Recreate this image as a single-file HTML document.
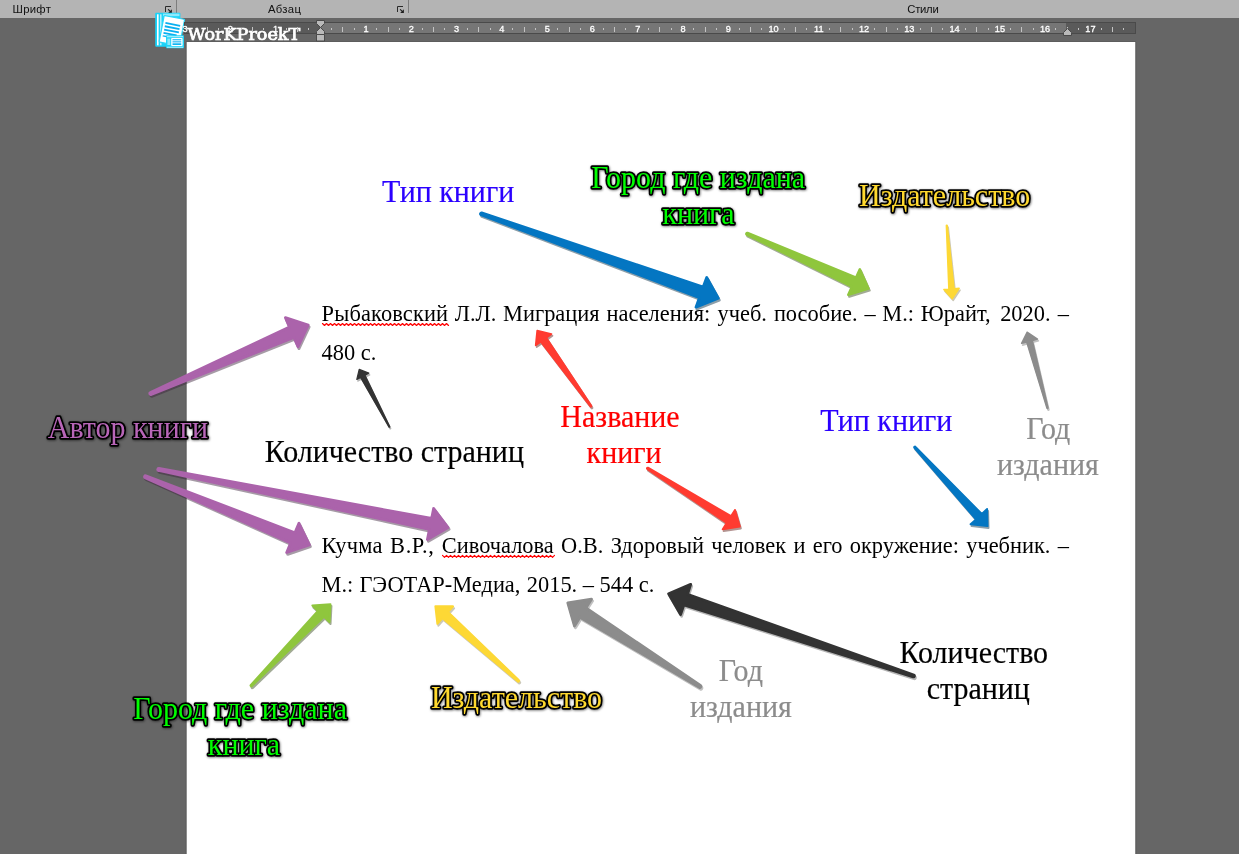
<!DOCTYPE html>
<html lang="ru">
<head>
<meta charset="utf-8">
<title>WorKProekT</title>
<style>
html,body{margin:0;padding:0;}
body{width:1239px;height:854px;overflow:hidden;background:#666666;position:relative;font-family:"Liberation Sans",sans-serif;}
#ribbon{position:absolute;left:0;top:0;width:1239px;height:18px;background:#b4b4b4;}
#ribbon span.t{position:absolute;top:2px;font-size:11.3px;line-height:14px;color:#111;white-space:nowrap;letter-spacing:0.3px;}
#ribbon i.sep{position:absolute;top:0;width:1px;height:13px;background:#7d7d7d;}
#ribbon svg.dl{position:absolute;top:6px;width:8px;height:8px;}
#root{position:absolute;left:0;top:0;width:1239px;height:854px;overflow:hidden;will-change:transform;}
#page{position:absolute;left:187px;top:42px;width:948px;height:812px;background:#ffffff;}
.p{position:absolute;left:321.6px;width:747.4px;font-family:"Liberation Serif",serif;font-size:22.4px;line-height:39px;color:#000;text-align:justify;margin:0;}
.w{position:relative;}
#ov,#rl{position:absolute;left:0;top:0;width:1239px;height:854px;}
#ov text{font-family:"Liberation Serif",serif;font-size:30px;text-anchor:middle;}
#ov text.ol{stroke:#000;stroke-width:3.4px;stroke-linejoin:round;paint-order:stroke fill;}
#rl text.rn{font-family:"Liberation Sans",sans-serif;font-size:9.2px;fill:#ffffff;stroke:#ffffff;stroke-width:0.3px;text-anchor:middle;}
#wm{font-family:"DejaVu Serif","Liberation Serif",serif;font-size:16px;fill:#fff;stroke:#fff;stroke-width:0.75px;}
#logo{position:absolute;left:153px;top:11px;width:34px;height:40px;}
</style>
</head>
<body>
<div id="root">
<div id="ribbon">
  <span class="t" style="left:12.5px">Шрифт</span>
  <span class="t" style="left:268px">Абзац</span>
  <span class="t" style="left:907.3px;letter-spacing:-0.28px">Стили</span>
  <i class="sep" style="left:176px"></i>
  <i class="sep" style="left:408px"></i>
  <svg class="dl" style="left:165px" viewBox="0 0 8 8"><path d="M0.5 6V0.5H6" fill="none" stroke="#2a2a2a" stroke-width="1"/><path d="M3.4 3.6L5.5 5.7" fill="none" stroke="#1e1e1e" stroke-width="1.1" stroke-linecap="round"/><path d="M6.9 3.2V6.9H3.2Z" fill="#1e1e1e"/></svg>
  <svg class="dl" style="left:397px" viewBox="0 0 8 8"><path d="M0.5 6V0.5H6" fill="none" stroke="#2a2a2a" stroke-width="1"/><path d="M3.4 3.6L5.5 5.7" fill="none" stroke="#1e1e1e" stroke-width="1.1" stroke-linecap="round"/><path d="M6.9 3.2V6.9H3.2Z" fill="#1e1e1e"/></svg>
</div>
<div id="page"></div>
<svg id="logo" viewBox="153 11 34 40">
  <rect x="155.2" y="12.7" width="25.2" height="34" rx="1" fill="#1bd3f8"/>
  <rect x="157" y="14.3" width="1.6" height="31" fill="#ffffff"/>
  <rect x="160.3" y="14.3" width="1.1" height="31" fill="#f2fdff"/>
  <rect x="163" y="13.6" width="16.5" height="2.6" fill="#8deafc"/>
  <g transform="rotate(11 164 15.6)">
    <rect x="164.2" y="15.4" width="20.8" height="27" rx="0.8" fill="#ffffff" stroke="#2bd7f9" stroke-width="1.2"/>
    <rect x="166.8" y="21.6" width="15" height="1.8" fill="#08b0f0"/>
    <rect x="166.8" y="25.0" width="15" height="1.8" fill="#08b0f0"/>
    <rect x="166.8" y="28.4" width="15" height="1.8" fill="#08b0f0"/>
    <rect x="166.8" y="31.8" width="13.4" height="1.8" fill="#08b0f0"/>
    <rect x="166.6" y="35" width="5" height="1.4" fill="#0fb6f2"/>
  </g>
  <rect x="166" y="35.2" width="18" height="13" rx="0.8" fill="#22d4f8"/>
  <rect x="167" y="36.3" width="16" height="0.9" fill="#d5f8fe"/>
  <rect x="171.2" y="38" width="11.4" height="8" rx="0.8" fill="#ffffff"/>
  <rect x="172.5" y="39.2" width="8.8" height="1.1" fill="#0fb6f2"/>
  <rect x="172.5" y="41.3" width="8.8" height="1.1" fill="#0fb6f2"/>
  <rect x="172.5" y="43.3" width="8.8" height="1.7" fill="#0fb6f2"/>
  <rect x="167.4" y="38.6" width="2.8" height="6.4" fill="#8be9fc"/>
  <rect x="167" y="46.8" width="16" height="0.8" fill="#d5f8fe"/>
</svg>
<svg id="rl" viewBox="0 0 1239 854">
  <rect x="186" y="41" width="950" height="1" fill="#5d5d5d"/>
  <rect x="185" y="42" width="1" height="812" fill="#616161"/>
  <rect x="186" y="42" width="1" height="812" fill="#8e8e8e"/>
  <rect x="1135" y="42" width="1" height="812" fill="#838383"/>
  <rect x="1136" y="42" width="1" height="812" fill="#616161"/>
  <rect x="184" y="22" width="952" height="12" fill="#4a4a4a"/>
  <rect x="185" y="23" width="950" height="10" fill="#5a5a5a"/>
  <rect x="321" y="23" width="745" height="10" fill="#767676"/>
  <text id="wm" transform="translate(187.6 40.4) scale(1.1 1)">WorKProekT</text>
  <text class="rn" x="185.0" y="32">3</text>
<rect x="195" y="28" width="1" height="2" fill="#c4c4c4"/>
<rect x="207" y="27" width="1" height="5" fill="#c4c4c4"/>
<rect x="218" y="28" width="1" height="2" fill="#c4c4c4"/>
<text class="rn" x="230.3" y="32">2</text>
<rect x="241" y="28" width="1" height="2" fill="#c4c4c4"/>
<rect x="252" y="27" width="1" height="5" fill="#c4c4c4"/>
<rect x="263" y="28" width="1" height="2" fill="#c4c4c4"/>
<text class="rn" x="275.5" y="32">1</text>
<rect x="286" y="28" width="1" height="2" fill="#c4c4c4"/>
<rect x="297" y="27" width="1" height="5" fill="#c4c4c4"/>
<rect x="308" y="28" width="1" height="2" fill="#c4c4c4"/>
<rect x="331" y="28" width="1" height="2" fill="#c4c4c4"/>
<rect x="342" y="27" width="1" height="5" fill="#c4c4c4"/>
<rect x="354" y="28" width="1" height="2" fill="#c4c4c4"/>
<text class="rn" x="366.1" y="32">1</text>
<rect x="376" y="28" width="1" height="2" fill="#c4c4c4"/>
<rect x="388" y="27" width="1" height="5" fill="#c4c4c4"/>
<rect x="399" y="28" width="1" height="2" fill="#c4c4c4"/>
<text class="rn" x="411.3" y="32">2</text>
<rect x="422" y="28" width="1" height="2" fill="#c4c4c4"/>
<rect x="433" y="27" width="1" height="5" fill="#c4c4c4"/>
<rect x="444" y="28" width="1" height="2" fill="#c4c4c4"/>
<text class="rn" x="456.6" y="32">3</text>
<rect x="467" y="28" width="1" height="2" fill="#c4c4c4"/>
<rect x="478" y="27" width="1" height="5" fill="#c4c4c4"/>
<rect x="490" y="28" width="1" height="2" fill="#c4c4c4"/>
<text class="rn" x="501.9" y="32">4</text>
<rect x="512" y="28" width="1" height="2" fill="#c4c4c4"/>
<rect x="524" y="27" width="1" height="5" fill="#c4c4c4"/>
<rect x="535" y="28" width="1" height="2" fill="#c4c4c4"/>
<text class="rn" x="547.2" y="32">5</text>
<rect x="557" y="28" width="1" height="2" fill="#c4c4c4"/>
<rect x="569" y="27" width="1" height="5" fill="#c4c4c4"/>
<rect x="580" y="28" width="1" height="2" fill="#c4c4c4"/>
<text class="rn" x="592.4" y="32">6</text>
<rect x="603" y="28" width="1" height="2" fill="#c4c4c4"/>
<rect x="614" y="27" width="1" height="5" fill="#c4c4c4"/>
<rect x="625" y="28" width="1" height="2" fill="#c4c4c4"/>
<text class="rn" x="637.7" y="32">7</text>
<rect x="648" y="28" width="1" height="2" fill="#c4c4c4"/>
<rect x="659" y="27" width="1" height="5" fill="#c4c4c4"/>
<rect x="671" y="28" width="1" height="2" fill="#c4c4c4"/>
<text class="rn" x="683.0" y="32">8</text>
<rect x="693" y="28" width="1" height="2" fill="#c4c4c4"/>
<rect x="705" y="27" width="1" height="5" fill="#c4c4c4"/>
<rect x="716" y="28" width="1" height="2" fill="#c4c4c4"/>
<text class="rn" x="728.2" y="32">9</text>
<rect x="739" y="28" width="1" height="2" fill="#c4c4c4"/>
<rect x="750" y="27" width="1" height="5" fill="#c4c4c4"/>
<rect x="761" y="28" width="1" height="2" fill="#c4c4c4"/>
<text class="rn" x="773.5" y="32">10</text>
<rect x="784" y="28" width="1" height="2" fill="#c4c4c4"/>
<rect x="795" y="27" width="1" height="5" fill="#c4c4c4"/>
<rect x="806" y="28" width="1" height="2" fill="#c4c4c4"/>
<text class="rn" x="818.8" y="32">11</text>
<rect x="829" y="28" width="1" height="2" fill="#c4c4c4"/>
<rect x="840" y="27" width="1" height="5" fill="#c4c4c4"/>
<rect x="852" y="28" width="1" height="2" fill="#c4c4c4"/>
<text class="rn" x="864.0" y="32">12</text>
<rect x="874" y="28" width="1" height="2" fill="#c4c4c4"/>
<rect x="886" y="27" width="1" height="5" fill="#c4c4c4"/>
<rect x="897" y="28" width="1" height="2" fill="#c4c4c4"/>
<text class="rn" x="909.3" y="32">13</text>
<rect x="920" y="28" width="1" height="2" fill="#c4c4c4"/>
<rect x="931" y="27" width="1" height="5" fill="#c4c4c4"/>
<rect x="942" y="28" width="1" height="2" fill="#c4c4c4"/>
<text class="rn" x="954.6" y="32">14</text>
<rect x="965" y="28" width="1" height="2" fill="#c4c4c4"/>
<rect x="976" y="27" width="1" height="5" fill="#c4c4c4"/>
<rect x="988" y="28" width="1" height="2" fill="#c4c4c4"/>
<text class="rn" x="999.9" y="32">15</text>
<rect x="1010" y="28" width="1" height="2" fill="#c4c4c4"/>
<rect x="1021" y="27" width="1" height="5" fill="#c4c4c4"/>
<rect x="1033" y="28" width="1" height="2" fill="#c4c4c4"/>
<text class="rn" x="1045.1" y="32">16</text>
<rect x="1055" y="28" width="1" height="2" fill="#c4c4c4"/>
<rect x="1067" y="27" width="1" height="5" fill="#c4c4c4"/>
<rect x="1078" y="28" width="1" height="2" fill="#c4c4c4"/>
<text class="rn" x="1090.4" y="32">17</text>
<rect x="1101" y="28" width="1" height="2" fill="#c4c4c4"/>
<rect x="1112" y="27" width="1" height="5" fill="#c4c4c4"/>
<rect x="1123" y="28" width="1" height="2" fill="#c4c4c4"/>
  <g fill="#b9b9b9" stroke="#4a4a4a" stroke-width="1" stroke-linejoin="round">
    <path d="M316.5 20.5H324.5V23.5L320.5 27.5L316.5 23.5Z"/>
    <path d="M316.5 34.5V31.5L320.5 27.5L324.5 31.5V34.5Z"/>
    <rect x="316.5" y="34.5" width="8" height="6.5"/>
    <path d="M1063.5 35.5V32.5L1067.5 28.5L1071.5 32.5V35.5Z"/>
  </g>
</svg>
<p class="p" style="top:294px"><span style="letter-spacing:0.15px">Рыбаковский</span> <span class="w" style="left:-0.6px">Л.Л.</span> <span class="w" style="left:-1.0px">Миграция</span> <span class="w" style="left:-1.2px">населения:</span> <span class="w" style="left:-1.0px">учеб.</span> <span class="w" style="left:-1.2px">пособие.</span> <span class="w" style="left:-1.5px">–</span> <span class="w" style="left:-2.0px">М.:</span> <span class="w" style="left:-2.4px">Юрайт,</span> 2020. – 480 с.</p>
<p class="p" style="top:526px"><span style="letter-spacing:0.3px">Кучма</span> <span style="letter-spacing:0.6px">В.Р.,</span> Сивочалова О.В. Здоровый человек и его окружение: учебник. – М.: <span class="w" style="left:0.5px">ГЭОТАР-Медиа,</span> <span class="w" style="left:1.3px">2015. – 544 с.</span></p>
<svg id="ov" viewBox="0 0 1239 854">
<defs>
<filter id="sh" x="-10%" y="-10%" width="120%" height="120%"><feDropShadow dx="1.0" dy="1.6" stdDeviation="0.5" flood-color="#000" flood-opacity="0.3"/></filter>
<filter id="bl" x="-10%" y="-10%" width="120%" height="120%"><feGaussianBlur stdDeviation="0.4"/></filter>
<filter id="gl" x="-5%" y="-30%" width="110%" height="160%"><feDropShadow dx="0.6" dy="0.8" stdDeviation="1.1" flood-color="#000" flood-opacity="0.55"/></filter>
</defs>
<polyline points="322.5,323.5 324.5,325.5 326.5,323.5 328.5,325.5 330.5,323.5 332.5,325.5 334.5,323.5 336.5,325.5 338.5,323.5 340.5,325.5 342.5,323.5 344.5,325.5 346.5,323.5 348.5,325.5 350.5,323.5 352.5,325.5 354.5,323.5 356.5,325.5 358.5,323.5 360.5,325.5 362.5,323.5 364.5,325.5 366.5,323.5 368.5,325.5 370.5,323.5 372.5,325.5 374.5,323.5 376.5,325.5 378.5,323.5 380.5,325.5 382.5,323.5 384.5,325.5 386.5,323.5 388.5,325.5 390.5,323.5 392.5,325.5 394.5,323.5 396.5,325.5 398.5,323.5 400.5,325.5 402.5,323.5 404.5,325.5 406.5,323.5 408.5,325.5 410.5,323.5 412.5,325.5 414.5,323.5 416.5,325.5 418.5,323.5 420.5,325.5 422.5,323.5 424.5,325.5 426.5,323.5 428.5,325.5 430.5,323.5 432.5,325.5 434.5,323.5 436.5,325.5 438.5,323.5 440.5,325.5 442.5,323.5 444.5,325.5 446.5,323.5 448.5,325.5" fill="none" stroke="#ff0000" stroke-width="1.15" stroke-linejoin="round" stroke-linecap="round"/>
<polyline points="442.5,555.4 444.5,557.4 446.5,555.4 448.5,557.4 450.5,555.4 452.5,557.4 454.5,555.4 456.5,557.4 458.5,555.4 460.5,557.4 462.5,555.4 464.5,557.4 466.5,555.4 468.5,557.4 470.5,555.4 472.5,557.4 474.5,555.4 476.5,557.4 478.5,555.4 480.5,557.4 482.5,555.4 484.5,557.4 486.5,555.4 488.5,557.4 490.5,555.4 492.5,557.4 494.5,555.4 496.5,557.4 498.5,555.4 500.5,557.4 502.5,555.4 504.5,557.4 506.5,555.4 508.5,557.4 510.5,555.4 512.5,557.4 514.5,555.4 516.5,557.4 518.5,555.4 520.5,557.4 522.5,555.4 524.5,557.4 526.5,555.4 528.5,557.4 530.5,555.4 532.5,557.4 534.5,555.4 536.5,557.4 538.5,555.4 540.5,557.4 542.5,555.4 544.5,557.4 546.5,555.4 548.5,557.4 550.5,555.4 552.5,557.4 554.5,555.4" fill="none" stroke="#ff0000" stroke-width="1.15" stroke-linejoin="round" stroke-linecap="round"/>
<g>
<path d="M480.9,214.7L699.4,297.6L696.0,307.2L718.3,298.3L706.7,277.4L703.2,287.0L481.6,212.9A1.00,1.00 0 0 0 480.9,214.7Z" transform="translate(1,1.8)" fill="#012943" stroke="#012943" stroke-width="2.80" stroke-linejoin="round" opacity="0.45" filter="url(#bl)"/><path d="M480.9,214.7L699.4,297.6L696.0,307.2L718.3,298.3L706.7,277.4L703.2,287.0L481.6,212.9A1.00,1.00 0 0 0 480.9,214.7Z" fill="#0476c2" stroke="#0476c2" stroke-width="2.80" stroke-linejoin="round"/>
<path d="M746.8,234.6L852.0,286.6L848.3,294.8L868.5,288.6L859.8,269.3L856.1,277.6L747.5,233.0A0.88,0.88 0 0 0 746.8,234.6Z" transform="translate(1,1.8)" fill="#324515" stroke="#324515" stroke-width="2.47" stroke-linejoin="round" opacity="0.45" filter="url(#bl)"/><path d="M746.8,234.6L852.0,286.6L848.3,294.8L868.5,288.6L859.8,269.3L856.1,277.6L747.5,233.0A0.88,0.88 0 0 0 746.8,234.6Z" fill="#8fc63d" stroke="#8fc63d" stroke-width="2.47" stroke-linejoin="round"/>
<path d="M946.3,225.7L948.8,289.1L943.8,289.5L952.2,298.8L959.2,288.3L954.2,288.7L947.3,225.6A0.49,0.49 0 0 0 946.3,225.7Z" transform="translate(1,1.8)" fill="#584b12" stroke="#584b12" stroke-width="1.36" stroke-linejoin="round" opacity="0.3" filter="url(#bl)"/><path d="M946.3,225.7L948.8,289.1L943.8,289.5L952.2,298.8L959.2,288.3L954.2,288.7L947.3,225.6A0.49,0.49 0 0 0 946.3,225.7Z" fill="#fdd835" stroke="#fdd835" stroke-width="1.36" stroke-linejoin="round"/>
<path d="M151.3,394.5L293.9,337.4L298.0,346.8L308.2,325.1L285.4,317.7L289.5,327.1L150.5,392.6A1.00,1.00 0 0 0 151.3,394.5Z" transform="translate(1,1.8)" fill="#3b223b" stroke="#3b223b" stroke-width="2.80" stroke-linejoin="round" opacity="0.45" filter="url(#bl)"/><path d="M151.3,394.5L293.9,337.4L298.0,346.8L308.2,325.1L285.4,317.7L289.5,327.1L150.5,392.6A1.00,1.00 0 0 0 151.3,394.5Z" fill="#ab63ab" stroke="#ab63ab" stroke-width="2.80" stroke-linejoin="round"/>
<path d="M389.7,426.5L364.9,375.1L368.8,373.1L359.2,369.4L356.8,379.4L360.6,377.4L388.9,426.9A0.43,0.43 0 0 0 389.7,426.5Z" transform="translate(1,1.8)" fill="#111111" stroke="#111111" stroke-width="1.20" stroke-linejoin="round" opacity="0.3" filter="url(#bl)"/><path d="M389.7,426.5L364.9,375.1L368.8,373.1L359.2,369.4L356.8,379.4L360.6,377.4L388.9,426.9A0.43,0.43 0 0 0 389.7,426.5Z" fill="#333333" stroke="#333333" stroke-width="1.20" stroke-linejoin="round"/>
<path d="M591.4,405.7L546.4,337.7L551.5,334.0L537.2,330.7L535.7,345.3L540.8,341.7L590.4,406.5A0.61,0.61 0 0 0 591.4,405.7Z" transform="translate(1,1.8)" fill="#591410" stroke="#591410" stroke-width="1.71" stroke-linejoin="round" opacity="0.45" filter="url(#bl)"/><path d="M591.4,405.7L546.4,337.7L551.5,334.0L537.2,330.7L535.7,345.3L540.8,341.7L590.4,406.5A0.61,0.61 0 0 0 591.4,405.7Z" fill="#ff3b30" stroke="#ff3b30" stroke-width="1.71" stroke-linejoin="round"/>
<path d="M647.2,468.9L726.7,523.0L722.8,529.3L739.8,526.6L735.0,510.0L731.0,516.2L647.9,467.7A0.72,0.72 0 0 0 647.2,468.9Z" transform="translate(1,1.8)" fill="#591410" stroke="#591410" stroke-width="2.02" stroke-linejoin="round" opacity="0.45" filter="url(#bl)"/><path d="M647.2,468.9L726.7,523.0L722.8,529.3L739.8,526.6L735.0,510.0L731.0,516.2L647.9,467.7A0.72,0.72 0 0 0 647.2,468.9Z" fill="#ff3b30" stroke="#ff3b30" stroke-width="2.02" stroke-linejoin="round"/>
<path d="M914.4,447.8L976.0,519.4L970.6,524.3L987.5,526.1L987.1,509.1L981.8,514.0L915.5,446.9A0.71,0.71 0 0 0 914.4,447.8Z" transform="translate(1,1.8)" fill="#012943" stroke="#012943" stroke-width="1.98" stroke-linejoin="round" opacity="0.45" filter="url(#bl)"/><path d="M914.4,447.8L976.0,519.4L970.6,524.3L987.5,526.1L987.1,509.1L981.8,514.0L915.5,446.9A0.71,0.71 0 0 0 914.4,447.8Z" fill="#0476c2" stroke="#0476c2" stroke-width="1.98" stroke-linejoin="round"/>
<path d="M1048.0,408.0L1032.3,340.5L1037.5,339.1L1027.1,332.2L1021.6,343.4L1026.7,342.0L1047.0,408.2A0.52,0.52 0 0 0 1048.0,408.0Z" transform="translate(1,1.8)" fill="#313131" stroke="#313131" stroke-width="1.46" stroke-linejoin="round" opacity="0.3" filter="url(#bl)"/><path d="M1048.0,408.0L1032.3,340.5L1037.5,339.1L1027.1,332.2L1021.6,343.4L1026.7,342.0L1047.0,408.2A0.52,0.52 0 0 0 1048.0,408.0Z" fill="#8c8c8c" stroke="#8c8c8c" stroke-width="1.46" stroke-linejoin="round"/>
<path d="M158.6,470.5L429.4,529.5L427.4,539.5L448.1,527.5L433.6,508.4L431.6,518.5L158.9,468.5A1.00,1.00 0 0 0 158.6,470.5Z" transform="translate(1,1.8)" fill="#3b223b" stroke="#3b223b" stroke-width="2.80" stroke-linejoin="round" opacity="0.45" filter="url(#bl)"/><path d="M158.6,470.5L429.4,529.5L427.4,539.5L448.1,527.5L433.6,508.4L431.6,518.5L158.9,468.5A1.00,1.00 0 0 0 158.6,470.5Z" fill="#ab63ab" stroke="#ab63ab" stroke-width="2.80" stroke-linejoin="round"/>
<path d="M145.0,477.6L290.6,543.0L286.7,552.5L309.4,544.8L298.9,523.2L294.9,532.7L145.8,475.8A1.00,1.00 0 0 0 145.0,477.6Z" transform="translate(1,1.8)" fill="#3b223b" stroke="#3b223b" stroke-width="2.80" stroke-linejoin="round" opacity="0.45" filter="url(#bl)"/><path d="M145.0,477.6L290.6,543.0L286.7,552.5L309.4,544.8L298.9,523.2L294.9,532.7L145.8,475.8A1.00,1.00 0 0 0 145.0,477.6Z" fill="#ab63ab" stroke="#ab63ab" stroke-width="2.80" stroke-linejoin="round"/>
<path d="M251.8,686.1L324.0,616.8L329.5,622.1L330.4,604.2L312.4,605.6L317.9,610.9L250.7,685.1A0.75,0.75 0 0 0 251.8,686.1Z" transform="translate(1,1.8)" fill="#324515" stroke="#324515" stroke-width="2.10" stroke-linejoin="round" opacity="0.45" filter="url(#bl)"/><path d="M251.8,686.1L324.0,616.8L329.5,622.1L330.4,604.2L312.4,605.6L317.9,610.9L250.7,685.1A0.75,0.75 0 0 0 251.8,686.1Z" fill="#8fc63d" stroke="#8fc63d" stroke-width="2.10" stroke-linejoin="round"/>
<path d="M518.9,680.3L448.0,612.0L453.1,606.4L435.4,606.2L437.4,623.8L442.5,618.1L517.9,681.4A0.74,0.74 0 0 0 518.9,680.3Z" transform="translate(1,1.8)" fill="#584b12" stroke="#584b12" stroke-width="2.07" stroke-linejoin="round" opacity="0.3" filter="url(#bl)"/><path d="M518.9,680.3L448.0,612.0L453.1,606.4L435.4,606.2L437.4,623.8L442.5,618.1L517.9,681.4A0.74,0.74 0 0 0 518.9,680.3Z" fill="#fdd835" stroke="#fdd835" stroke-width="2.07" stroke-linejoin="round"/>
<path d="M700.4,685.5L586.0,607.8L591.5,599.2L567.8,602.9L574.5,626.0L580.0,617.3L699.3,687.2A1.00,1.00 0 0 0 700.4,685.5Z" transform="translate(1,1.8)" fill="#313131" stroke="#313131" stroke-width="2.80" stroke-linejoin="round" opacity="0.3" filter="url(#bl)"/><path d="M700.4,685.5L586.0,607.8L591.5,599.2L567.8,602.9L574.5,626.0L580.0,617.3L699.3,687.2A1.00,1.00 0 0 0 700.4,685.5Z" fill="#8c8c8c" stroke="#8c8c8c" stroke-width="2.80" stroke-linejoin="round"/>
<path d="M913.8,675.0L687.5,594.2L690.7,584.4L668.6,593.7L680.6,614.5L683.9,604.8L913.2,676.9A1.00,1.00 0 0 0 913.8,675.0Z" transform="translate(1,1.8)" fill="#111111" stroke="#111111" stroke-width="2.80" stroke-linejoin="round" opacity="0.3" filter="url(#bl)"/><path d="M913.8,675.0L687.5,594.2L690.7,584.4L668.6,593.7L680.6,614.5L683.9,604.8L913.2,676.9A1.00,1.00 0 0 0 913.8,675.0Z" fill="#333333" stroke="#333333" stroke-width="2.80" stroke-linejoin="round"/>
</g>
<g filter="url(#gl)">
<text class="ol" x="698.2" y="187.7" fill="#00ff00" transform="matrix(1 0 0 1.02 0 -3.75)">Город где издана</text>
<text class="ol" x="698.5" y="224.3" fill="#00ff00" transform="matrix(1 0 0 1.02 0 -4.49)">книга</text>
<text class="ol" x="944.6" y="206.0" fill="#ffd92f" transform="matrix(1 0 0 1.02 0 -4.12)">Издательство</text>
<text class="ol" x="127.9" y="437.6" fill="#b866b8" transform="matrix(1 0 0 1.02 0 -8.75)">Автор книги</text>
<text class="ol" x="240.1" y="719.0" fill="#00ff00" transform="matrix(1 0 0 1.02 0 -14.38)">Город где издана</text>
<text class="ol" x="244.0" y="755.2" fill="#00ff00" transform="matrix(1 0 0 1.02 0 -15.10)">книга</text>
<text class="ol" x="516.5" y="708.3" fill="#ffd92f" transform="matrix(1 0 0 1.02 0 -14.17)">Издательство</text>
</g>
<text class="pl" x="448.2" y="202" fill="#2b00ff" stroke="#2b00ff" stroke-width="0.2" transform="matrix(1 0 0 1.03 0 -6.06)">Тип книги</text>
<text class="pl" x="394.3" y="462" fill="#000000" stroke="#000000" stroke-width="0.2" transform="matrix(1 0 0 1.03 0 -13.86)">Количество страниц</text>
<text class="pl" x="620" y="427.1" fill="#ff0000" stroke="#ff0000" stroke-width="0.2" transform="matrix(1 0 0 1.03 0 -12.81)">Название</text>
<text class="pl" x="624.1" y="463" fill="#ff0000" stroke="#ff0000" stroke-width="0.2" transform="matrix(1 0 0 1.03 0 -13.89)">книги</text>
<text class="pl" x="886.3" y="430.8" fill="#2b00ff" stroke="#2b00ff" stroke-width="0.2" transform="matrix(1 0 0 1.03 0 -12.92)">Тип книги</text>
<text class="pl" x="1048.3" y="439" fill="#8c8c8c" stroke="#8c8c8c" stroke-width="0.2" transform="matrix(1 0 0 1.03 0 -13.17)">Год</text>
<text class="pl" x="1047.9" y="474.7" fill="#8c8c8c" stroke="#8c8c8c" stroke-width="0.2" transform="matrix(1 0 0 1.03 0 -14.24)">издания</text>
<text class="pl" x="740.9" y="681.3" fill="#8c8c8c" stroke="#8c8c8c" stroke-width="0.2" transform="matrix(1 0 0 1.03 0 -20.44)">Год</text>
<text class="pl" x="740.9" y="717.5" fill="#8c8c8c" stroke="#8c8c8c" stroke-width="0.2" transform="matrix(1 0 0 1.03 0 -21.53)">издания</text>
<text class="pl" x="973.8" y="663.3" fill="#000000" stroke="#000000" stroke-width="0.2" transform="matrix(1 0 0 1.03 0 -19.90)">Количество</text>
<text class="pl" x="978.3" y="699.1" fill="#000000" stroke="#000000" stroke-width="0.2" transform="matrix(1 0 0 1.03 0 -20.97)">страниц</text>
</svg>
</div>
</body>
</html>
